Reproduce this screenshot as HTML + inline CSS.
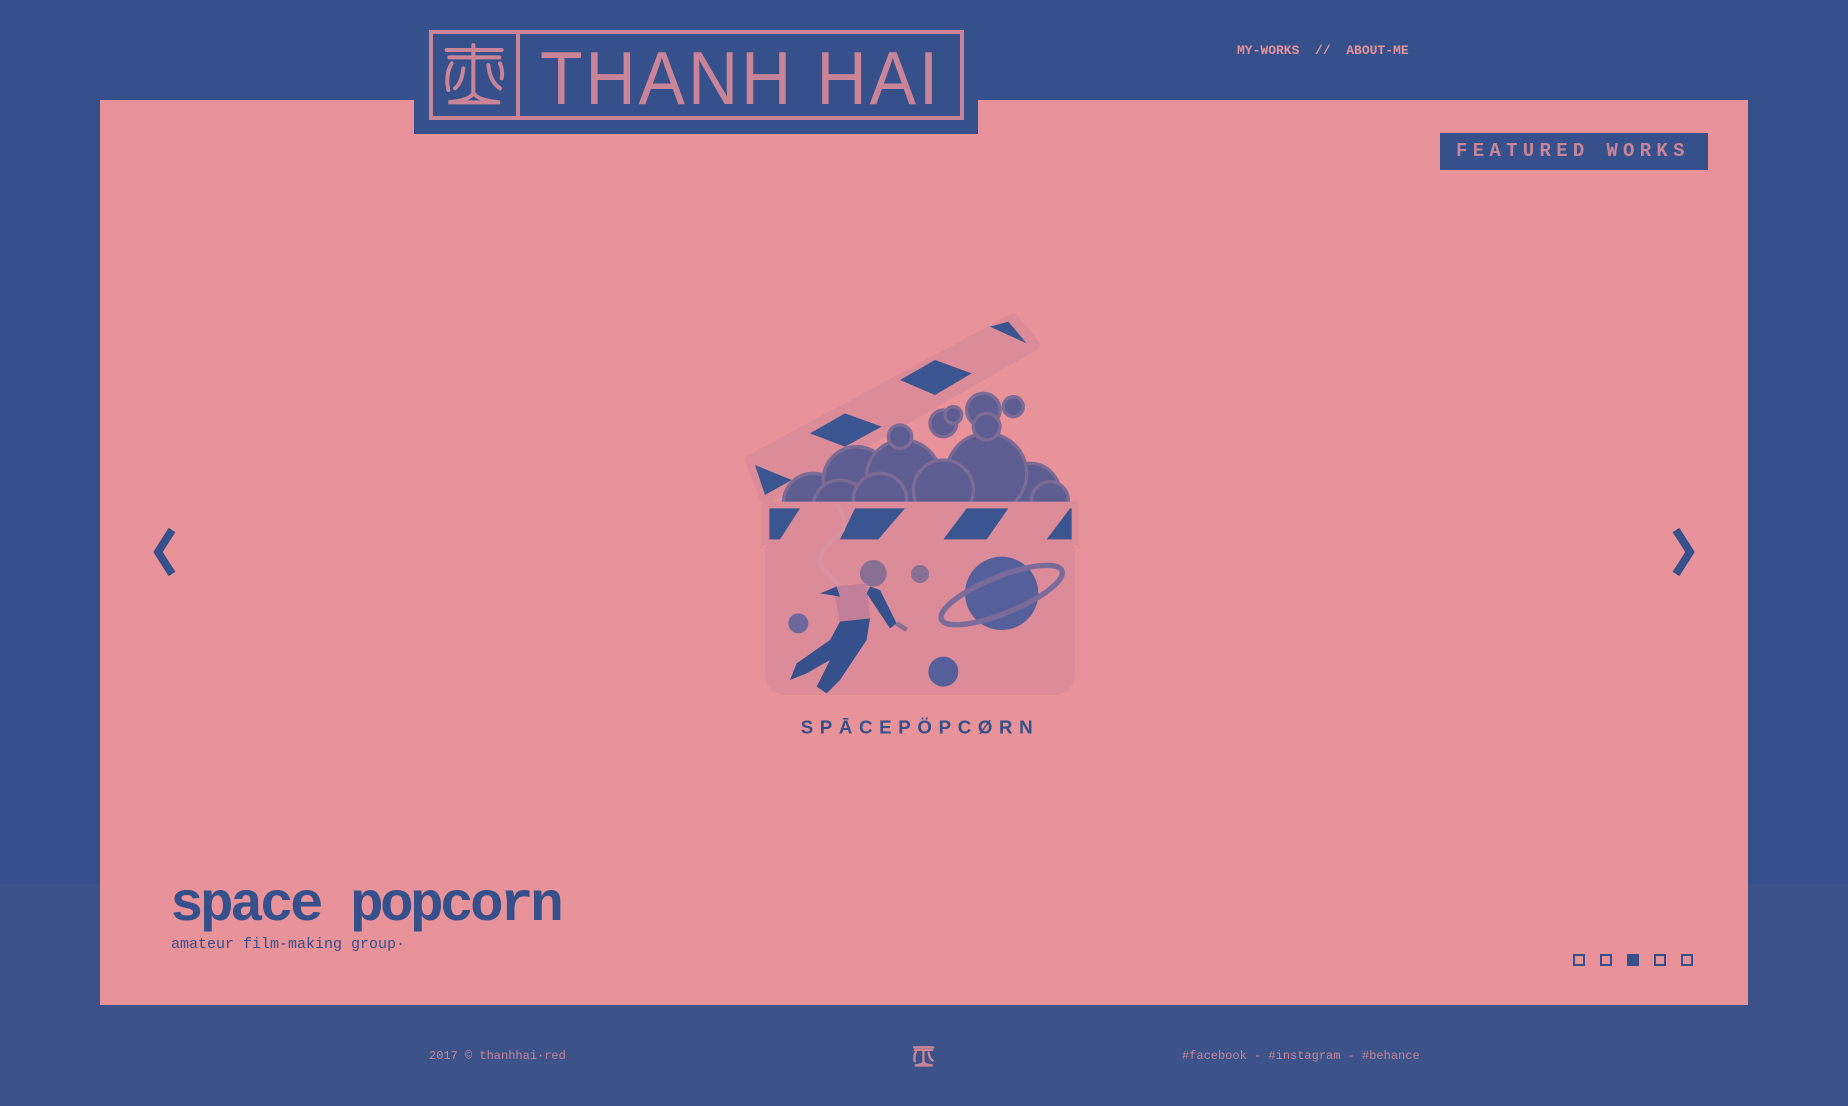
<!DOCTYPE html>
<html><head><meta charset="utf-8"><style>
*{margin:0;padding:0;box-sizing:border-box}
body{width:1848px;height:1106px;overflow:hidden;background:#35508a;position:relative;font-family:"Liberation Mono",monospace}
.abs{position:absolute}
#low{left:0;top:884px;width:1848px;height:222px;background:#3c5389}
#panel{left:100px;top:100px;width:1648px;height:905px;background:#e8929a}
#logobg{left:414px;top:0;width:564px;height:134px;background:#35508a}
#logobox{left:429px;top:30px;width:535px;height:90px;border:4px solid #c98597}
#div{left:516px;top:30px;width:4px;height:90px;background:#c98597}
#name{left:540px;top:36px;font-family:"Liberation Sans",sans-serif;font-size:75px;color:#c98597;letter-spacing:3px;line-height:84px;white-space:nowrap;transform:scaleX(0.93);transform-origin:0 0}
#nav{left:1237px;top:43px;font-size:13px;font-weight:bold;color:#e8929a;white-space:nowrap;letter-spacing:0px}
#feat{left:1440px;top:133px;width:268px;height:37px;background:#35508a;color:#c98597;font-size:19px;font-weight:bold;letter-spacing:5.3px;line-height:37px;padding-left:16px;white-space:nowrap}
#title{left:170px;top:870px;font-size:56px;font-weight:bold;color:#35508a;letter-spacing:-3.6px;white-space:nowrap;line-height:70px}
#sub{left:171px;top:936px;font-size:15px;color:#35508a;white-space:nowrap}
.dot{position:absolute;top:954px;width:12px;height:12px;border:2.5px solid #35508a}
.foot{top:1049px;font-size:12px;color:#c98597;white-space:nowrap}
</style></head><body>
<div class="abs" id="low"></div>
<div class="abs" id="panel"></div>
<div class="abs" id="logobg"></div>
<div class="abs" id="logobox"></div>
<div class="abs" id="div"></div>
<svg class="abs" style="left:420px;top:25px" width="140" height="100" viewBox="0 0 420 300">
<g fill="none" stroke="#c98597" stroke-linecap="round" stroke-width="12">
<path d="M80 75 H245"/><path d="M160 60 V97"/><path d="M88 97 H238"/>
<path d="M95 115 Q75 150 85 195"/><path d="M130 130 Q125 175 105 190"/>
<path d="M160 97 V205 Q150 225 85 232 H240 Q172 225 162 205"/>
<path d="M205 120 Q210 170 240 190"/><path d="M240 115 Q250 140 245 160"/>
</g></svg>
<div class="abs" id="name">THANH HAI</div>
<div class="abs" id="nav">MY-WORKS &nbsp;// &nbsp;ABOUT-ME</div>
<div class="abs" id="feat">FEATURED WORKS</div>
<svg class="abs" style="left:148px;top:526px" width="32" height="52" viewBox="0 0 32 52"><path d="M24 4 L10 26 L24 48" fill="none" stroke="#35508a" stroke-width="8"/></svg>
<svg class="abs" style="left:1668px;top:526px" width="32" height="52" viewBox="0 0 32 52"><path d="M8 4 L22 26 L8 48" fill="none" stroke="#35508a" stroke-width="8"/></svg>

<svg class="abs" style="left:730px;top:300px" width="370" height="450" viewBox="0 0 1110 1350">
<polygon points="60,480 850,55 915,135 105,600" fill="#dc8c98" stroke="#dc8c98" stroke-width="30" stroke-linejoin="round"/>
<polygon points="75,495 185,540 105,585" fill="#3a5590"/>
<polygon points="240,400 345,340 455,380 345,440" fill="#3a5590"/>
<polygon points="510,240 615,180 725,220 615,285" fill="#3a5590"/>
<polygon points="780,80 835,65 890,130" fill="#3a5590"/>
<g fill="#5d5d91" stroke="#7c6b96" stroke-width="10">
<circle cx="250" cy="610" r="90"/><circle cx="380" cy="540" r="100"/><circle cx="900" cy="580" r="90"/>
<circle cx="520" cy="530" r="110"/><circle cx="770" cy="520" r="120"/><circle cx="640" cy="570" r="90"/>
<circle cx="960" cy="600" r="55"/><circle cx="330" cy="620" r="80"/><circle cx="450" cy="600" r="80"/>
<circle cx="510" cy="410" r="35"/><circle cx="640" cy="370" r="40"/><circle cx="760" cy="330" r="50"/>
<circle cx="770" cy="380" r="40"/><circle cx="850" cy="320" r="30"/><circle cx="670" cy="345" r="25"/>
</g>
<rect x="105" y="700" width="930" height="485" rx="60" fill="#dc8c98"/>
<rect x="95" y="605" width="950" height="130" fill="#dc8c98"/>
<g fill="#3a5590">
<polygon points="118,625 210,625 150,718 118,718"/>
<polygon points="375,625 525,625 445,718 330,718"/>
<polygon points="710,625 835,625 770,718 640,718"/>
<polygon points="1020,625 1025,625 1025,718 950,718"/>
</g>
<circle cx="815" cy="880" r="110" fill="#55609a"/>
<ellipse cx="815" cy="885" rx="195" ry="55" transform="rotate(-22 815 885)" fill="none" stroke="#7a6b9a" stroke-width="16"/>
<circle cx="570" cy="822" r="27" fill="#8a6f95"/>
<circle cx="205" cy="970" r="30" fill="#6d6899"/>
<circle cx="640" cy="1115" r="45" fill="#55609a"/>
<path d="M320 610 Q360 680 330 700 Q260 760 270 790 Q300 830 340 870" fill="none" stroke="#d893a3" stroke-width="10"/>
<circle cx="430" cy="820" r="40" fill="#8a6f95"/>
<path d="M310 860 L410 850 L420 960 L330 975 Z" fill="#c27f99"/>
<path d="M270 880 L320 860 L330 890 Z M420 860 L450 870 L500 970 L480 985 L410 880 Z" fill="#35508a"/>
<path d="M330 965 L420 955 L410 1020 L330 1140 L290 1180 L260 1160 L300 1080 L230 1120 L180 1140 L200 1090 L300 1020 Z" fill="#35508a"/>
<path d="M500 970 L530 990" stroke="#8a6f95" stroke-width="14"/>
<text x="570" y="1300" text-anchor="middle" font-family="Liberation Sans,sans-serif" font-weight="bold" font-size="56" letter-spacing="20" fill="#35508a">SPĀCEPÖPCØRN</text>
</svg>

<div class="abs" id="title">space popcorn</div>
<div class="abs" id="sub">amateur film-making group·</div>
<div class="dot" style="left:1573px"></div>
<div class="dot" style="left:1600px"></div>
<div class="dot" style="left:1627px;background:#35508a"></div>
<div class="dot" style="left:1654px"></div>
<div class="dot" style="left:1681px"></div>
<div class="abs foot" style="left:429px">2017 © thanhhai·red</div>
<svg class="abs" style="left:913px;top:1044px" width="22" height="24" viewBox="70 50 190 200">
<g fill="none" stroke="#c98597" stroke-linecap="round" stroke-width="20">
<path d="M80 75 H245"/><path d="M88 97 H238"/><path d="M95 115 Q75 150 85 195"/>
<path d="M160 97 V205 Q150 225 85 232 H240 Q172 225 162 205"/><path d="M205 120 Q210 170 240 190"/></g></svg>
<div class="abs foot" style="left:1182px">#facebook - #instagram - #behance</div>
</body></html>
